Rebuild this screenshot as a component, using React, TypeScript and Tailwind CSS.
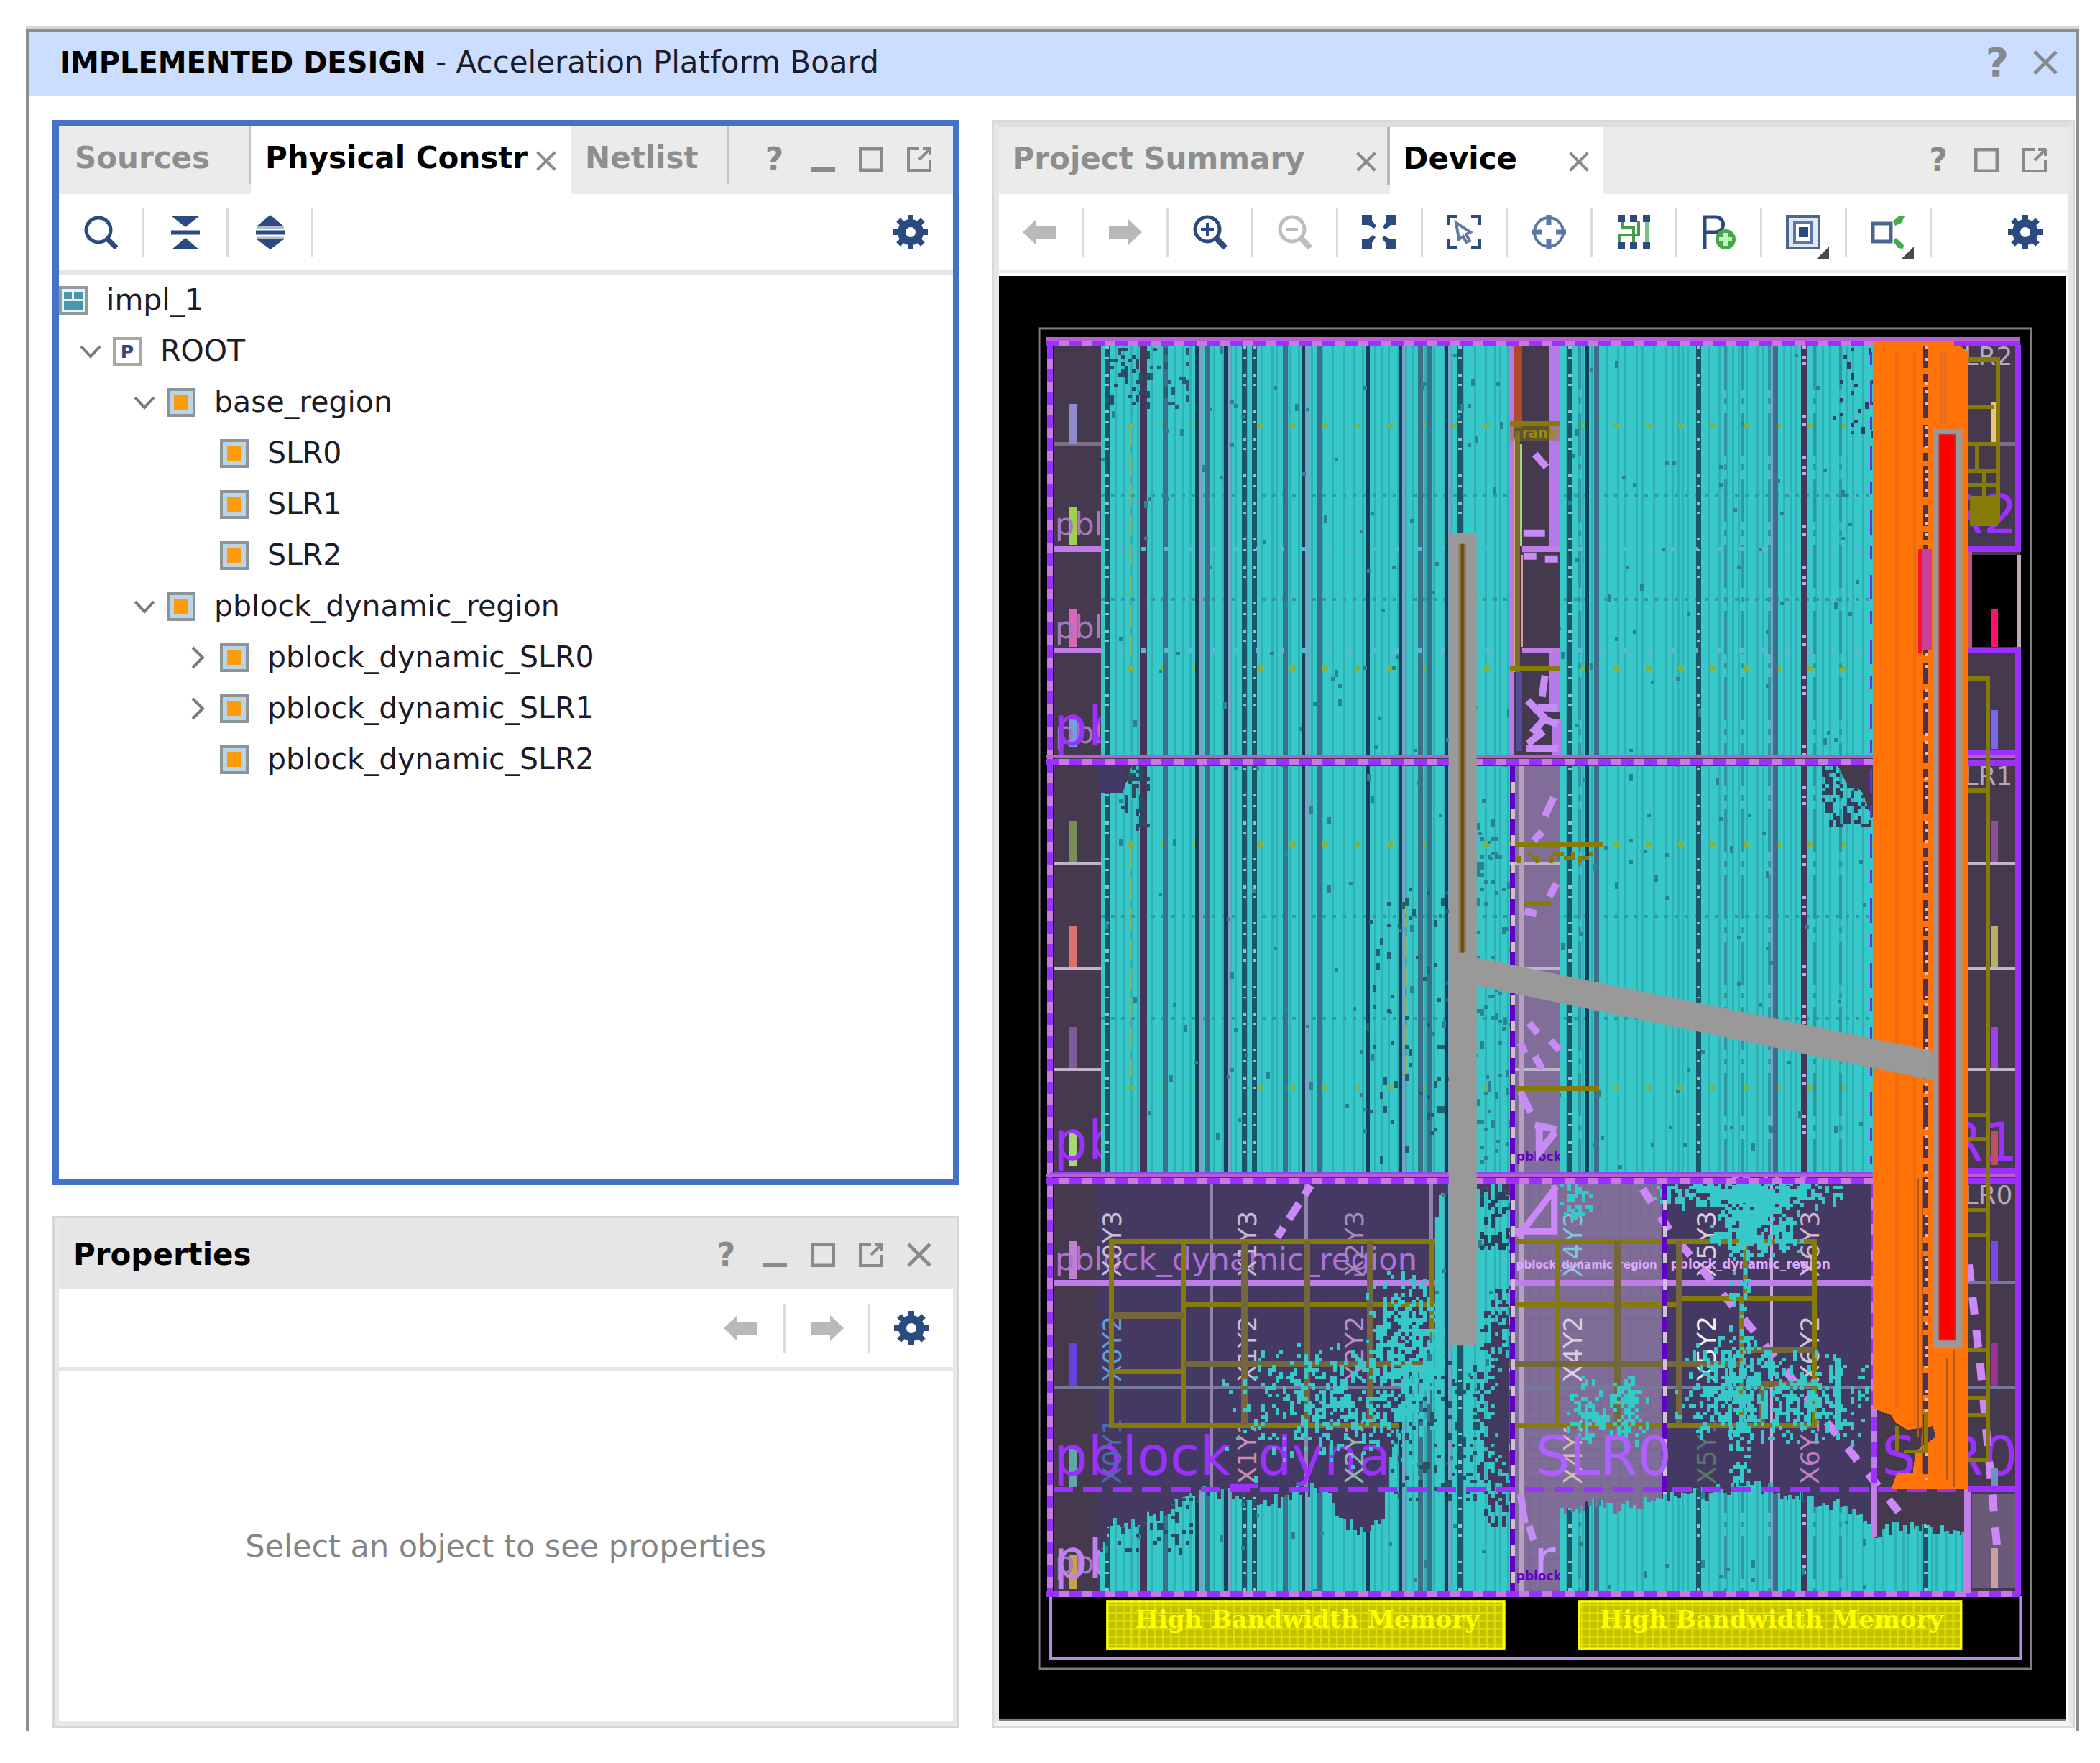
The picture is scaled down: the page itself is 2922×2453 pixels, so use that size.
import React from "react";

/* ---------- shared icons ---------- */

const NAVY = "#2b4a80";

function Svg({ children, size = 48, label }: { children: React.ReactNode; size?: number; label?: string }) {
  return (
    <svg width={size} height={size} viewBox="0 0 48 48" fill="none" className="shrink-0" aria-hidden={label ? undefined : true} aria-label={label}>
      {children}
    </svg>
  );
}

const SearchIcon = () => (
  <Svg>
    <circle cx="21" cy="21" r="17" stroke={NAVY} strokeWidth="5" />
    <path d="M33 33 46 46" stroke={NAVY} strokeWidth="7" />
  </Svg>
);
const CollapseIcon = () => (
  <Svg>
    <path d="M5 2H43L24 17Z M24 32 43 48H5Z" fill={NAVY} />
    <path d="M4 24.500H44" stroke={NAVY} strokeWidth="6" />
  </Svg>
);
const ExpandIcon = () => (
  <Svg>
    <path d="M24 0 43 16H5Z M5 34H43L24 48Z" fill={NAVY} />
    <path d="M4 24.500H44" stroke={NAVY} strokeWidth="6" />
    <path d="M5 17.500H43M5 32H43" stroke="#b3bccb" strokeWidth="3" />
  </Svg>
);
const GearIcon = () => (
  <Svg>
    <g fill={NAVY}>
      {[0, 45, 90, 135].map((a) => (
        <rect key={a} x="20" y="0" width="8" height="48" transform={`rotate(${a} 24 24)`} />
      ))}
      <circle cx="24" cy="24" r="18" />
    </g>
    <circle cx="24" cy="24" r="7" fill="#fff" />
  </Svg>
);
const ArrowIcon = ({ flip = false }: { flip?: boolean }) => (
  <Svg>
    <path d={flip ? "M48 24 29 6V15H2V33H29V42Z" : "M0 24 19 6V15H46V33H19V42Z"} fill="#b9b9b9" />
  </Svg>
);
const ZoomIcon = ({ minus = false }: { minus?: boolean }) => {
  const c = minus ? "#bdbdbd" : NAVY;
  return (
    <Svg>
      <circle cx="21" cy="20" r="17" stroke={c} strokeWidth="5" />
      <path d="M33 32 46 46" stroke={c} strokeWidth="8" />
      <path d={minus ? "M13 20H29" : "M12 20H30M21 11V29"} stroke={c} strokeWidth="4" />
    </Svg>
  );
};
const FitIcon = () => (
  <Svg>
    <g fill={NAVY}>
      {[0, 90, 180, 270].map((a) => (
        <path key={a} d="M0 0H14V8L20 15 17 19 9 14H0Z" transform={`rotate(${a} 24 24)`} />
      ))}
    </g>
  </Svg>
);
const SelectAreaIcon = () => (
  <Svg>
    <g fill={NAVY}>
      {[0, 90, 180, 270].map((a) => (
        <path key={a} d="M0 0H14V5H5V14H0Z" transform={`rotate(${a} 24 24)`} />
      ))}
    </g>
    <path d="M13 11 33 24 27 27 32 36 27 38 23 30 17 34Z" stroke="#6478a0" strokeWidth="4" />
  </Svg>
);
const TargetIcon = () => (
  <Svg>
    <circle cx="24" cy="24" r="20" stroke="#5d76a5" strokeWidth="4" />
    <path d="M24 0V14M24 34V48M0 24H14M34 24H48" stroke="#5d76a5" strokeWidth="7" />
  </Svg>
);
const RoutingIcon = () => (
  <Svg>
    <path d="M8 8V17H24V42M31 8V28H5V40" stroke="#4a9a4c" strokeWidth="4" />
    <path d="M43 8V40" stroke="#7cc08a" strokeWidth="6" />
    <g fill={NAVY}>
      {[2, 19, 37].map((x) => (
        <React.Fragment key={x}>
          <rect x={x} y="0" width="10" height="10" />
          <rect x={x} y="38" width="10" height="10" />
        </React.Fragment>
      ))}
    </g>
  </Svg>
);
const AddPblockIcon = () => (
  <Svg>
    <path d="M5 48V3H20C34 3 34 24 20 24H7" stroke={NAVY} strokeWidth="5" />
    <circle cx="34" cy="34" r="14" fill="#47a84a" />
    <path d="M34 25V43M25 34H43" stroke="#c5f5c5" strokeWidth="6" />
  </Svg>
);
const Corner = () => (
  <svg width="18" height="18" viewBox="0 0 16 16" className="absolute right-[22px] bottom-[-4px]" aria-hidden>
    <path d="M16 0V16H0Z" fill="#4a4a4a" />
  </svg>
);
const LayersIcon = () => (
  <Svg>
    <rect x="2" y="2" width="44" height="44" fill="#dfe9f2" stroke="#4d658f" strokeWidth="4" />
    <rect x="12" y="11" width="24" height="27" fill="#fff" stroke="#5d76a5" strokeWidth="4" />
    <rect x="18" y="17" width="13" height="14" fill={NAVY} />
  </Svg>
);
const DriverIcon = () => (
  <Svg>
    <rect x="3" y="12" width="25" height="25" stroke="#4d658f" strokeWidth="5" />
    <path d="M31 9 40 1 47 2 43 11 34 15ZM31 36 35 32 46 42 45 47 38 46Z" fill="#43ac48" />
  </Svg>
);

const MinimizeGlyph = () => <path d="M0 31H34" stroke="#8a8a8a" strokeWidth="6" />;
const MaximizeGlyph = () => <path d="M2 2H32V32H2Z" stroke="#8a8a8a" strokeWidth="5" />;
const FloatGlyph = () => <path d="M17 2H2V32H32V17M17 17 31 3M22 2H33M32 1V11" stroke="#8a8a8a" strokeWidth="4" />;
const CloseGlyph = () => <path d="M2 2 32 32M32 2 2 32" stroke="#8a8a8a" strokeWidth="5" />;

function WinButton({ label, children }: { label: string; children: React.ReactNode }) {
  return (
    <button type="button" aria-label={label} className="flex h-9 w-[34px] items-center justify-center">
      <svg width="34" height="34" viewBox="0 0 34 34" fill="none">
        {children}
      </svg>
    </button>
  );
}
function HelpButton({ big = false }: { big?: boolean }) {
  return (
    <button
      type="button"
      aria-label="Help"
      className={
        big
          ? "flex w-9 items-center justify-center text-[56px] leading-none font-bold text-[#85888f]"
          : "flex w-[34px] items-center justify-center text-[44px] leading-none font-bold text-[#8a8a8a]"
      }
    >
      ?
    </button>
  );
}

function ToolCell({ label, rule, children, corner }: { label: string; rule?: "left" | "right"; children: React.ReactNode; corner?: boolean }) {
  return (
    <div
      className={
        rule === "right"
          ? "w-[118px] border-r-[3px] border-[#dadada]"
          : rule === "left"
            ? "w-[118px] border-l-[3px] border-[#dadada]"
            : "w-[118px]"
      }
    >
      <button type="button" aria-label={label} className="relative flex h-[68px] w-full items-center justify-center">
        {children}
        {corner && <Corner />}
      </button>
    </div>
  );
}

function TabClose({ name }: { name: string }) {
  return (
    <button type="button" aria-label={`Close ${name}`} className="ml-auto flex h-11 w-7 items-end justify-center pb-1">
      <svg width="28" height="28" viewBox="0 0 34 34" fill="none">
        <CloseGlyph />
      </svg>
    </button>
  );
}

/* ---------- constraint tree ---------- */

type Node = { name: string; level: number; kind: "impl" | "root" | "block"; open?: boolean };

const nodes: Node[] = [
  { name: "impl_1", level: 0, kind: "impl" },
  { name: "ROOT", level: 1, kind: "root", open: true },
  { name: "base_region", level: 2, kind: "block", open: true },
  { name: "SLR0", level: 3, kind: "block" },
  { name: "SLR1", level: 3, kind: "block" },
  { name: "SLR2", level: 3, kind: "block" },
  { name: "pblock_dynamic_region", level: 2, kind: "block", open: true },
  { name: "pblock_dynamic_SLR0", level: 3, kind: "block", open: false },
  { name: "pblock_dynamic_SLR1", level: 3, kind: "block", open: false },
  { name: "pblock_dynamic_SLR2", level: 3, kind: "block" },
];

function NodeIcon({ kind }: { kind: Node["kind"] }) {
  return (
    <svg width="40" height="40" viewBox="0 0 40 40" fill="none" className="shrink-0" aria-hidden>
      {kind === "impl" && (
        <>
          <rect x="2" y="2" width="36" height="36" fill="#e8f5f7" stroke="#8f9c9e" strokeWidth="4" />
          <path d="M7 8H18V18H7ZM21 8H33V18H21ZM7 21H33V33H7Z" fill="#4c95ad" />
        </>
      )}
      {kind === "root" && (
        <>
          <rect x="2" y="2" width="36" height="36" fill="#fff" stroke="#a8a8a8" strokeWidth="4" />
          <text x="20" y="29" textAnchor="middle" fontSize="25" fontWeight="bold" fill={NAVY}>
            P
          </text>
        </>
      )}
      {kind === "block" && (
        <>
          <rect x="2" y="2" width="36" height="36" fill="#bcd5e4" stroke="#8a9499" strokeWidth="4" />
          <rect x="10" y="10" width="20" height="20" fill="#ff9a0a" />
        </>
      )}
    </svg>
  );
}

function TreeRow({ node }: { node: Node }) {
  return (
    <li className="flex h-[71px] items-center" role="treeitem" aria-level={node.level + 1}>
      {node.level > 1 && <span className={node.level === 2 ? "w-[75px]" : "w-[149px]"} />}
      {node.level > 0 && (
        <span className="flex w-[75px] pl-[28px]">
          {node.open !== undefined && (
            <button type="button" aria-label={`Toggle ${node.name}`} className="flex h-8 w-8 items-center justify-center">
              <svg width="32" height="32" viewBox="0 0 32 32" fill="none" stroke="#7a7a7a" strokeWidth="4">
                <path d={node.open ? "M3 9 16 23 29 9" : "M9 2 23 16 9 30"} />
              </svg>
            </button>
          )}
        </span>
      )}
      <NodeIcon kind={node.kind} />
      <span className="pl-[26px] text-[41px] leading-none text-[#1e1a26]">{node.name}</span>
    </li>
  );
}

/* ---------- device floorplan ---------- */

function random(seed: number) {
  let s = seed;
  return () => {
    s = (s + 0x6d2b79f5) | 0;
    let t = Math.imul(s ^ (s >>> 15), 1 | s);
    t = (t + Math.imul(t ^ (t >>> 7), 61 | t)) ^ t;
    return ((t ^ (t >>> 14)) >>> 0) / 4294967296;
  };
}

/** Path of small cells sprinkled over a box. */
function scatter(x0: number, y0: number, x1: number, y1: number, density: number, seed: number) {
  const r = random(seed);
  let d = "";
  for (let y = y0; y < y1; y += 5)
    for (let x = x0; x < x1; x += 5) if (r() < density) d += `M${x} ${y}h5v${r() < 0.3 ? 10 : 5}h-5z`;
  return d;
}

/** Like scatter, but densest at the middle of the box. */
function cloud(x0: number, y0: number, x1: number, y1: number, density: number, seed: number) {
  const r = random(seed);
  const cx = (x0 + x1) / 2;
  const cy = (y0 + y1) / 2;
  let d = "";
  for (let y = y0; y < y1; y += 5)
    for (let x = x0; x < x1; x += 5) {
      const q = Math.hypot((x - cx) / (x1 - cx), (y - cy) / (y1 - cy));
      if (r() < density * Math.max(0, 1.25 - q)) d += `M${x} ${y}h5v${r() < 0.4 ? 10 : 5}h-5z`;
    }
  return d;
}

/** Ragged skyline from a list of points down to a base line. */
function skyline(points: number[][], base: number, seed: number) {
  const r = random(seed);
  let d = `M${points[0][0]} ${base}`;
  for (let i = 0; i < points.length - 1; i++) {
    const [xa, ya] = points[i];
    const [xb, yb] = points[i + 1];
    if (xa === xb) {
      d += `V${yb}`;
      continue;
    }
    for (let x = xa; x < xb; x += 5) {
      const y = ya + ((yb - ya) * (x - xa)) / (xb - xa) + (r() - 0.4) * 20;
      d += `V${Math.round(y)}H${Math.min(x + 5, xb)}`;
    }
  }
  return d + `V${base}Z`;
}

const lowerLeft = [[1530, 2150], [1544, 2120], [1579, 2118], [1599, 2110], [1619, 2104], [1639, 2090], [1659, 2082], [1674, 2074], [1728, 2077], [1748, 2090], [1778, 2088], [1803, 2072], [1843, 2072], [1853, 2098], [1868, 2117], [1897, 2130], [1907, 2114], [1922, 2108], [1932, 2034], [1942, 1986], [1952, 1918], [1978, 1900], [1997, 1840], [1997, 1684], [2005, 1655], [2101, 1655]];
const lowerRight = [[2171, 2104], [2205, 2093], [2257, 2098], [2299, 2088], [2341, 2072], [2373, 2077], [2415, 2066], [2467, 2069], [2488, 2088], [2504, 2082], [2535, 2088], [2572, 2098], [2593, 2114], [2609, 2135], [2624, 2125], [2666, 2125], [2708, 2130], [2729, 2135], [2736, 2200]];

const cells =
  "M1532 480H2101V1052H1532ZM2171 480H2607V1052H2171Z" +
  "M1532 1104H1562L1575 1066H2101V1632H1532ZM2171 1066H2558L2570 1090 2590 1100 2607 1140V1632H2171Z" +
  skyline(lowerLeft, 2218, 5) +
  skyline(lowerRight, 2218, 8);

const darkLines = [1666, 1706, 1814, 1904, 1949, 2013, 2209];
const slateLines = [1622, 1681, 1789, 1837, 1977, 1990, 2222, 2471];
const paleLines = [1711, 1819, 1953, 1672, 2017, 2465];
const dottedLines = [1540, 1732, 1746, 2032, 2185, 2364, 2680];

function softLines() {
  const r = random(21);
  let d = "";
  for (let x = 1552; x < 2740; x += 6 + Math.floor(r() * 12)) d += `M${x} 482V2218`;
  return d;
}

const leftMarks: [number, number, string][] = [
  [562, 618, "#8c8cc8"], [706, 758, "#9ed050"], [847, 900, "#d868b8"], [995, 1040, "#70a0e0"],
  [1143, 1200, "#7a8f58"], [1288, 1345, "#e07070"], [1430, 1487, "#7d5a98"], [1577, 1624, "#a8d870"],
  [1728, 1780, "#c080d0"], [1870, 1930, "#6840e0"], [2012, 2070, "#60a8a8"], [2165, 2212, "#c8a050"],
];
const rightMarks: [number, number, string][] = [
  [560, 615, "#e8c878"], [847, 900, "#ff1070"], [988, 1042, "#7868f0"], [1143, 1200, "#8a5090"],
  [1288, 1345, "#b8b068"], [1430, 1487, "#a040e8"], [1575, 1622, "#c05060"], [1728, 1783, "#7848e8"],
  [1870, 1930, "#a03090"], [2043, 2068, "#7090c0"], [2155, 2210, "#c8a0a0"],
];

const tiles: [number, number, string, string][] = [
  [1560, 1778, "X0Y3", "#c8c0d0"], [1748, 1778, "X1Y3", "#c8b8d0"], [1897, 1778, "X2Y3", "#a888b8"],
  [2201, 1778, "X4Y3", "#7fc8d8"], [2387, 1778, "X5Y3", "#d8d0d8"], [2531, 1778, "X6Y3", "#d0b8c8"],
  [1560, 1924, "X0Y2", "#60a0d8"], [1748, 1924, "X1Y2", "#c8c0d0"], [1897, 1924, "X2Y2", "#b890c0"],
  [2201, 1924, "X4Y2", "#d8d0e0"], [2387, 1924, "X5Y2", "#f0f0f0"], [2531, 1924, "X6Y2", "#d0c8d8"],
  [1560, 2066, "X0Y1", "#5468b0"], [1748, 2066, "X1Y1", "#c890b0"], [1897, 2066, "X2Y1", "#90b8a8"],
  [2201, 2066, "X4Y1", "#d0c0b0"], [2387, 2066, "X5Y1", "#5a7868"], [2531, 2066, "X6Y1", "#c080c8"],
];

function Memory({ x, width }: { x: number; width: number }) {
  return (
    <g>
      <rect x={x} y="2227" width={width} height="70" fill="#c0c000" />
      <rect x={x} y="2227" width={width} height="70" fill="url(#mesh)" />
      <rect x={x + 2} y="2229" width={width - 4} height="66" fill="none" stroke="#ffff00" strokeWidth="3" />
      <text x={x + width / 2 + 2} y="2266" textAnchor="middle" fill="#ffff00" fontSize="34" fontWeight="bold" className="font-['DejaVu_Serif',serif]">
        High Bandwidth Memory
      </text>
    </g>
  );
}

function Floorplan() {
  return (
    <svg viewBox="1391 384 1484 2009" className="absolute inset-0 h-full w-full" role="img" aria-label="Device floorplan" fill="none">
      <defs>
        <pattern id="mesh" width="11" height="11" patternUnits="userSpaceOnUse">
          <path d="M0 0H11M0 0V11" stroke="#dede00" strokeWidth="5" />
        </pattern>
        <pattern id="fabric" width="14" height="14" patternUnits="userSpaceOnUse">
          <path d="M0 0H14M0 0V14" stroke="#3d3a78" strokeWidth="3" />
        </pattern>
        <clipPath id="placed">
          <path d={cells} />
        </clipPath>
      </defs>

      <rect x="1446" y="457" width="1381" height="1866" stroke="#7d7d7d" strokeWidth="3" />
      <path d="M1462 2222V2308H2812V2222" stroke="#b090d8" strokeWidth="4" />

      <g shapeRendering="crispEdges">
        {/* fabric */}
        <rect x="1466" y="480" width="1345" height="1740" fill="#45394d" />
        <rect x="1526" y="1648" width="1080" height="570" fill="#453960" />
        <rect x="1526" y="1648" width="1080" height="570" fill="url(#fabric)" opacity=".6" />
        <rect x="1526" y="1066" width="40" height="40" fill="#413a66" />
        <rect x="2108" y="1066" width="63" height="566" fill="#806e98" />
        <rect x="2108" y="1648" width="204" height="570" fill="#806e98" />
        <rect x="2108" y="1648" width="204" height="570" fill="url(#fabric)" opacity=".12" />
        <rect x="2745" y="2080" width="62" height="130" fill="#6a5a78" />
        <path d="M1466 618H2101M2120 618H2171M2740 618H2805" stroke="#7d6d8a" strokeWidth="6" />
        <path d="M1466 1202H2805M1466 1347H2805M1466 1489H2805" stroke="#c0b4c8" strokeWidth="4" />
        <path d="M2740 1786H2805M1466 1931H2805" stroke="#76789c" strokeWidth="4" />
        <path d="M1686 1648V2218M1818 1648V2218M1992 1648V2218" stroke="#9484a8" strokeWidth="5" />
        <path d="M2465 1648V2218" stroke="#c8a8d8" strokeWidth="4" />
        <path d="M2117 1066V1632M2117 1648V2218" stroke="#b8a0c0" strokeWidth="6" />
        <path d="M1466 764H2740M1466 905H2740M1466 1786H2607" stroke="#c07ce8" strokeWidth="8" />
        {leftMarks.map(([a, b, c]) => (
          <rect key={a} x="1488" y={a} width="11" height={b - a} fill={c} />
        ))}
      </g>

      {/* region names */}
      <g fontSize="43" fill="#a878c8">
        <text x="1468" y="744">pblock_dynamic_region</text>
        <text x="1468" y="888">pblock_dynamic_region</text>
        <text x="1468" y="1034">pblock_dynamic_region</text>
        <text x="1468" y="1768" fill="#b070dc">pblock_dynamic_region</text>
        <text x="1468" y="2190">pblock</text>
      </g>
      <g fontSize="75" fill="#9b30ff">
        <text x="1466" y="1036">pblock_dynamic</text>
        <text x="1466" y="1614">pblock_dynamic</text>
        <text x="1466" y="2053">pblock_dynamic</text>
        <text x="2808" y="2053" textAnchor="end">SLR0</text>
        <text x="2808" y="1616" textAnchor="end">SLR1</text>
        <text x="2808" y="742" textAnchor="end">SLR2</text>
        <text x="1466" y="2196" fill="#c080f0">pb</text>
        <text x="2134" y="2196" fill="#cc90ff">r</text>
      </g>
      <g fontSize="36" fill="#b8a8bc" textAnchor="end">
        <text x="2801" y="508">SLR2</text>
        <text x="2801" y="1092">SLR1</text>
        <text x="2801" y="1676">SLR0</text>
      </g>
      {tiles.map(([x, y, name, color]) => (
        <text key={`${x}-${y}`} transform={`translate(${x} ${y}) rotate(-90)`} fontSize="36" fill={color}>
          {name}
        </text>
      ))}
      <g fontSize="17" fontWeight="bold" fill="#e0a8ff">
        <text x="2110" y="1766" fontSize="15">pblock_dynamic_region</text>
        <text x="2325" y="1766">pblock_dynamic_region</text>
        <text x="2110" y="1616" fill="#6000c8">pblock</text>
        <text x="2110" y="2200" fill="#6000c8">pblock</text>
      </g>

      <g stroke="#cc88f8" strokeWidth="11">
        <path d="M1824 1650 1776 1724" strokeDasharray="16 14 26 14" />
        <path d="M2286 1655 2325 1715 2445 1858 2655 2120" strokeDasharray="22 24" />
        <path d="M2740 1760 2756 1900 2780 2160" strokeDasharray="24 22" />
        <path d="M2163 1650V1714H2108M2112 1722 2166 1652" strokeWidth="9" />
      </g>

      <g shapeRendering="crispEdges">
        {/* clock and memory outlines */}
        <g stroke="#867a08" strokeWidth="7">
          <path d="M1546 1728H2525V1984H1546ZM1647 1728V1984M1992 1728V1984M2167 1728V1984M1546 1909H1647M1647 1815H2337M2337 1807H2525M2429 1728V1807M2423 1807V1984M2079 1815V1984" />
          <path d="M1732 1728V1984M1819 1728V1984M1907 1728V1984M2251 1728V1984M2337 1728V1984M1546 1831H1647M1647 1898H2423M2423 1879H2525M2440 1926H2525M2452 1926V1984" stroke="#74673c" strokeWidth="9" />
        </g>

        {/* placed cells */}
        <path d={cells} fill="#37c8ca" />
        <g clipPath="url(#placed)">
          <path d={softLines()} stroke="#31b0b6" strokeWidth="3" />
          <path d="M1570 592H2607M1570 930H2607M1570 1175H2607M1570 1515H2607" stroke="#7fb440" strokeWidth="6" strokeDasharray="8 37" />
          <path d="M1573 590V930M1573 1180V1500M1957 1260V1500" stroke="#7db860" strokeWidth="4" strokeDasharray="30 12" />
          <path d="M1532 690H2607M1532 834H2607M1532 1275H2607M1532 1418H2607" stroke="#2e9aa2" strokeWidth="4" strokeDasharray="5 9" />
          <path d="M1591 482V2218" stroke="#453558" strokeWidth="10" />
          <path d="M2510 482V2218" stroke="#453558" strokeWidth="8" />
          <path d="M2510 482V2218" stroke="#c8a8d8" strokeWidth="6" strokeDasharray="4 9 4 5 4 70 4 7 4 42" />
          <path d={paleLines.map((x) => `M${x} 482V2218`).join("")} stroke="#76a4c4" strokeWidth="5" />
          <path d={slateLines.map((x) => `M${x} 482V2218`).join("")} stroke="#3a7088" strokeWidth="7" />
          <path d={darkLines.map((x) => `M${x} 482V2218`).join("")} stroke="#123f55" strokeWidth="5" />
          <path d={dottedLines.map((x) => `M${x} 482V2218`).join("")} stroke="#1c5468" strokeWidth="7" />
          <path d={dottedLines.map((x) => `M${x} 482V2218`).join("")} stroke="#86c4ce" strokeWidth="5" strokeDasharray="3 12 3 20 5 9 3 34" />
          <path d="M2198 482V2218M2401 482V2218M2424 482V2218M2462 482V2218M2525 482V2218M2561 482V2218" stroke="#3097a2" strokeWidth="4" strokeDasharray="60 12 8 12" />
          <path d="M1460 764H2607M1460 905H2607" stroke="#58b8d8" strokeWidth="6" strokeDasharray="6 26" />
          <path d={scatter(1532, 482, 2607, 2218, 0.005, 3)} fill="#2a8490" />
          <path d={scatter(1545, 484, 1600, 560, 0.3, 4)} fill="#2c4a60" />
          <path d={scatter(1600, 484, 1655, 575, 0.12, 6)} fill="#2c5a70" />
          <path d={scatter(1555, 1066, 1600, 1150, 0.3, 14)} fill="#2c4a60" />
          <path d={scatter(2535, 1066, 2607, 1150, 0.28, 15)} fill="#333e5c" />
          <path d={scatter(2550, 484, 2607, 600, 0.08, 16)} fill="#333e5c" />
          <path d={scatter(2055, 1130, 2101, 1620, 0.07, 17)} fill="#2a8490" />
          <path d={scatter(1900, 1200, 2016, 1620, 0.03, 18)} fill="#23606e" />
          <path d={scatter(1530, 2080, 1660, 2160, 0.16, 19)} fill="#2a4a60" />
          <path d={scatter(2060, 1650, 2101, 1745, 0.3, 22)} fill="#2a3f5c" />
          <path d={cloud(2055, 1790, 2125, 2130, 0.9, 23)} fill="#413a5e" />
          <path d={scatter(1935, 1880, 2060, 2090, 0.1, 24)} fill="#2a5064" />
        </g>
        <path d={cloud(1730, 1870, 1960, 2030, 0.42, 31)} fill="#37c8ca" />
        <path d={cloud(1900, 1770, 2010, 1990, 0.6, 32)} fill="#37c8ca" />
        <path d={cloud(2380, 1640, 2510, 1750, 0.85, 33)} fill="#37c8ca" />
        <path d={cloud(2300, 1636, 2570, 1680, 0.95, 41)} fill="#37c8ca" />
        <path d={cloud(2330, 1860, 2480, 2000, 0.5, 34)} fill="#37c8ca" />
        <path d={cloud(2430, 1880, 2600, 2010, 0.42, 35)} fill="#37c8ca" />
        <path d={cloud(2180, 1910, 2230, 2010, 0.5, 36)} fill="#37c8ca" />
        <path d={cloud(2230, 1910, 2292, 2010, 0.6, 37)} fill="#37c8ca" />
        <path d={scatter(2406, 1740, 2436, 2070, 0.26, 38)} fill="#37c8ca" />
        <path d={scatter(2171, 1648, 2215, 1690, 0.4, 39)} fill="#37c8ca" />
        <path d={scatter(1700, 1900, 2000, 2060, 0.02, 40)} fill="#37c8ca" />
        <path d="M2557 1890V1990" stroke="#37c8ca" strokeWidth="8" />

        {/* centre channel */}
        <rect x="2101" y="482" width="70" height="570" fill="#45394d" />
        <path d="M2104 482V1052" stroke="#b878e8" strokeWidth="7" />
        <path d="M2113 482V595" stroke="#b0482c" strokeWidth="11" />
        <path d="M2109 610V935" stroke="#d8b078" strokeWidth="3" />
        <path d="M2112 600V935" stroke="#80692e" strokeWidth="7" />
        <path d="M2117 618V760" stroke="#a0d878" strokeWidth="3" />
        <path d="M2118 772V900" stroke="#d8a080" strokeWidth="3" />
        <path d="M2114 935V1045" stroke="#544a98" strokeWidth="9" />
        <path d="M2163 482V760M2166 1000V1050M2163 905V990" stroke="#b878e8" strokeWidth="14" />
        <path d="M2118 764H2171M2118 905H2171" stroke="#c07ce8" strokeWidth="8" />
        <rect x="2101" y="588" width="70" height="26" fill="#867a08" opacity=".4" />
        <path d="M2101 590H2171M2101 930H2171M2101 1175H2230M2120 1258H2158M2101 1515H2225" stroke="#867a08" strokeWidth="7" />
        <path d={scatter(2101, 1186, 2225, 1196, 0.3, 52)} fill="#867a08" />
      </g>
      <g stroke="#c48cf4" strokeWidth="10">
        <path d="M2136 632 2152 650M2120 742H2150M2120 774H2138M2150 778H2168" />
        <path d="M2150 940 2146 970M2126 975 2150 1000 2132 1020M2140 985H2168M2146 1000 2168 1008M2126 1035 2148 1018M2124 1042H2168" />
        <path d="M2162 1110 2150 1136M2146 1158 2134 1170M2166 1230 2156 1248M2122 1268 2138 1272M2128 1424 2140 1438M2158 1448 2170 1462M2136 1470 2146 1488M2116 1452 2122 1466M2116 1520 2130 1548M2136 1566 2166 1572M2142 1566V1604L2164 1576" />
        <path d="M2116 2080 2122 2120M2128 2124 2134 2144" />
      </g>
      <text x="2118" y="609" fontSize="19" fontWeight="bold" fill="#9a8c08">
        rank
      </text>

      <g shapeRendering="crispEdges">
        {/* region borders */}
        <path d="M2105 1066V1632M2105 1648V2218M2317 1648V2080" stroke="#cfc0d8" strokeWidth="6" />
        <path d="M2105 1066V1632M2105 1648V2218M2317 1648V2080" stroke="#6000c8" strokeWidth="7" strokeDasharray="22 15" />
        <path d="M1456 477H2812M1456 1060H2740M1456 1644H2607M1461 471V2222M1456 2219H2812" stroke="#c878e8" strokeWidth="8" />
        <path d="M1456 477H2812M1456 1060H2740M1456 1644H2607M1461 482V2222M1456 2219H2812" stroke="#9b30ff" strokeWidth="8" strokeDasharray="17 15" />
        <path d="M1456 472H2812M1456 1053H2812M1456 1636H2812" stroke="#b860d0" strokeWidth="5" />
        <path d="M1461 1632H2740" stroke="#9048f8" strokeWidth="3" />
        <path d="M1466 2073H2740" stroke="#9b30ff" strokeWidth="7" strokeDasharray="27 14" />
        <path d="M2609 1648V2140" stroke="#c080e8" strokeWidth="8" />
        <path d="M2609 1648V2073" stroke="#9b30ff" strokeWidth="8" strokeDasharray="20 16" />
        <path d="M2604 490V1620" stroke="#6a30d0" strokeWidth="4" strokeDasharray="18 22 34 16" />
        <path d="M2738 2073V2218" stroke="#c080e8" strokeWidth="9" />

        {/* highlighted clock column */}
        <path d="M2607 475H2720L2740 490V2073H2632L2640 2050H2662L2666 2020 2680 2010 2694 2000 2690 1985 2655 1990 2640 1982 2632 1970 2607 1960Z" fill="#ff7308" />
        <path d="M2640 490V1960M2665 490V1985M2702 490V590M2708 490V590" stroke="#ea6c14" strokeWidth="4" />
        <path d="M2676 1640V2050M2670 1640V2000M2710 1890V2060M2720 1880V2070" stroke="#b05a20" strokeWidth="2" />
        <path d="M2680 482V2060" stroke="#4a3350" strokeWidth="6" strokeDasharray="30 8 12 6 44 10" />
        <path d="M2681 482V2060" stroke="#f0b8b8" strokeWidth="4" strokeDasharray="4 12 4 30 4 7" />
        <path d="M2682 764V905" stroke="#c84098" strokeWidth="14" />
        <path d="M2672 764V908" stroke="#ff1030" strokeWidth="5" />
        <path d="M2640 1985V2020M2680 1965V2020H2650" stroke="#867a08" strokeWidth="5" />

        {/* right edge */}
        <rect x="2744" y="772" width="68" height="128" fill="#000" />
        <path d="M2742 768V905" stroke="#c05080" strokeWidth="5" />
        <path d="M2740 764H2812M2740 905H2812M2809 480V768M2809 900V2220M2740 1047H2812M2740 1062H2812M2740 1630H2812M2740 1644H2812M2740 2073H2812" stroke="#9b30ff" strokeWidth="8" />
        <path d="M2720 478H2812" stroke="#9b30ff" strokeWidth="6" />
        <path d="M2810 772V900" stroke="#c0a8b8" strokeWidth="6" />
        {rightMarks.map(([a, b, c]) => (
          <rect key={a} x="2771" y={a} width="10" height={b - a} fill={c} />
        ))}
        <path d="M2740 500H2781V728M2740 566H2776M2740 618H2781M2752 618V655M2740 655H2781M2740 675H2781M2762 655V700" stroke="#867a08" strokeWidth="6" />
        <path d="M2742 690H2781V732H2742Z" fill="#867a08" />
        <path d="M2740 944H2767V2032H2740M2740 1100H2767M2740 1552H2767M2740 1586H2767M2740 1685H2767M2740 1719H2767M2740 1879H2767M2740 1946H2767M2740 1970H2767" stroke="#867a08" strokeWidth="6" />
      </g>
      <text x="2137" y="2053" fontSize="75" fill="#b060ff">
        SLR0
      </text>

      {/* selected path */}
      <path d="M2016 742H2055V1333L2691 1463V1504L2055 1372V1873H2016Z" fill="#999" />
      <path d="M2035 757V1326" stroke="#94763e" strokeWidth="10" />
      <path d="M2035 757V1326" stroke="#6a4c1a" strokeWidth="4" />
      <rect x="2691" y="597" width="40" height="1279" fill="#999" />
      <rect x="2699" y="605" width="22" height="1260" fill="#f00" stroke="#c03030" strokeWidth="2" />

      <Memory x={1539} width={556} />
      <Memory x={2196} width={535} />
    </svg>
  );
}

/* ---------- page ---------- */

export default function App() {
  return (
    <main className="h-screen bg-white pt-9 pr-[29px] pb-[45px] pl-9 font-['DejaVu_Sans',sans-serif]">
      <div className="flex h-full flex-col border-t-4 border-[#d6d6d6]">
        <div className="flex min-h-0 flex-1 flex-col border-x-4 border-t-4 border-[#8e8e8e]">
          <header className="flex h-[90px] shrink-0 items-center bg-[#ccdeff] pr-[26px] pb-1 pl-[43px]">
            <h1 className="text-[42px] leading-none whitespace-pre text-[#1b1b2b]">
              <strong className="text-[40px] text-black">IMPLEMENTED DESIGN</strong>
              {" - Acceleration Platform Board"}
            </h1>
            <div className="ml-auto flex items-center gap-8">
              <HelpButton big />
              <WinButton label="Close design">
                <CloseGlyph />
              </WinButton>
            </div>
          </header>

          <div className="grid min-h-0 flex-1 grid-cols-[1262fr_1508fr] gap-x-[45px] pt-[33px] pr-[2px] pb-1 pl-[33px]">
            <div className="grid min-h-0 grid-rows-[1482fr_712fr] gap-[43px]">
              {/* constraints */}
              <section className="flex min-h-0 flex-col border-[9px] border-[#4472c8]">
                <div className="flex h-[94px] shrink-0 items-stretch bg-[#ebebeb] text-[42px] leading-none font-bold text-[#8e8e8e]" role="tablist">
                  <div className="flex w-[267px] items-start">
                    <button type="button" role="tab" className="h-[80px] w-full border-r-[3px] border-[#c4c4c4] pt-2 pl-[22px] text-left font-bold">
                      Sources
                    </button>
                  </div>
                  <div className="flex w-[446px] items-start bg-white pt-[22px] pr-[21px] pl-[20px]">
                    <button type="button" role="tab" aria-selected="true" className="h-11 font-bold text-black">
                      Physical Constr
                    </button>
                    <TabClose name="Physical Constraints" />
                  </div>
                  <div className="flex w-[219px] items-start">
                    <button type="button" role="tab" className="h-[80px] w-full border-r-[3px] border-[#c4c4c4] pt-2 pl-[19px] text-left font-bold">
                      Netlist
                    </button>
                  </div>
                  <div className="ml-auto flex h-[92px] items-center gap-[33px] pr-[30px]">
                    <HelpButton />
                    <WinButton label="Minimize">
                      <MinimizeGlyph />
                    </WinButton>
                    <WinButton label="Maximize">
                      <MaximizeGlyph />
                    </WinButton>
                    <WinButton label="Float">
                      <FloatGlyph />
                    </WinButton>
                  </div>
                </div>
                <div className="flex h-[112px] shrink-0 items-center border-b-[6px] border-[#e6e6e6]" role="toolbar">
                  <ToolCell label="Search" rule="right">
                    <SearchIcon />
                  </ToolCell>
                  <ToolCell label="Collapse all" rule="right">
                    <CollapseIcon />
                  </ToolCell>
                  <ToolCell label="Expand all" rule="right">
                    <ExpandIcon />
                  </ToolCell>
                  <div className="ml-auto">
                    <ToolCell label="Settings">
                      <GearIcon />
                    </ToolCell>
                  </div>
                </div>
                <ul role="tree" className="min-h-0 flex-1 overflow-hidden">
                  {nodes.map((n) => (
                    <TreeRow key={n.name} node={n} />
                  ))}
                </ul>
              </section>

              {/* properties */}
              <section className="flex min-h-0 flex-col border-[3px] border-[#d6d6d6]">
                <div className="flex min-h-0 flex-1 flex-col border-x-[6px] border-b-[7px] border-[#e8e8e8]">
                  <div className="flex h-[98px] shrink-0 items-center bg-[#e6e6e6] pt-1 pr-[30px] pl-[20px]">
                    <h2 className="text-[42px] leading-none font-bold text-black">Properties</h2>
                    <div className="ml-auto flex items-center gap-[33px]">
                      <HelpButton />
                      <WinButton label="Minimize">
                        <MinimizeGlyph />
                      </WinButton>
                      <WinButton label="Maximize">
                        <MaximizeGlyph />
                      </WinButton>
                      <WinButton label="Float">
                        <FloatGlyph />
                      </WinButton>
                      <WinButton label="Close">
                        <CloseGlyph />
                      </WinButton>
                    </div>
                  </div>
                  <div className="flex h-[115px] shrink-0 items-center justify-end border-b-[6px] border-[#e6e6e6]" role="toolbar">
                    <ToolCell label="Back">
                      <ArrowIcon />
                    </ToolCell>
                    <ToolCell label="Forward" rule="left">
                      <ArrowIcon flip />
                    </ToolCell>
                    <ToolCell label="Settings" rule="left">
                      <GearIcon />
                    </ToolCell>
                  </div>
                  <p className="flex flex-1 items-center justify-center text-[43px] leading-none text-[#858585]">
                    Select an object to see properties
                  </p>
                </div>
              </section>
            </div>

            {/* device */}
            <section className="flex min-h-0 flex-col border-[3px] border-[#d9d9d9]">
              <div className="flex min-h-0 flex-1 flex-col border-x-[7px] border-t-[7px] border-b-[7px] border-x-[#e6e6e6] border-t-[#dedede] border-b-[#f4f4f4]">
                <div className="flex h-[93px] shrink-0 items-start bg-[#ebebeb] text-[42px] leading-none font-bold text-[#8e8e8e]" role="tablist">
                  <div className="flex h-[80px] w-[544px] items-start border-r-[4px] border-[#b8b8b8] pt-[22px] pr-[15px] pl-[19px]">
                    <button type="button" role="tab" className="h-11 font-bold">
                      Project Summary
                    </button>
                    <TabClose name="Project Summary" />
                  </div>
                  <div className="flex h-full w-[296px] items-start bg-white pt-[22px] pr-[19px] pl-[19px]">
                    <button type="button" role="tab" aria-selected="true" className="h-11 font-bold text-black">
                      Device
                    </button>
                    <TabClose name="Device" />
                  </div>
                  <div className="ml-auto flex h-[92px] items-center gap-[33px] pr-[29px]">
                    <HelpButton />
                    <WinButton label="Maximize">
                      <MaximizeGlyph />
                    </WinButton>
                    <WinButton label="Float">
                      <FloatGlyph />
                    </WinButton>
                  </div>
                </div>
                <div className="flex h-[110px] shrink-0 items-center border-b-[4px] border-[#ebebeb]" role="toolbar">
                  <ToolCell label="Back" rule="right">
                    <ArrowIcon />
                  </ToolCell>
                  <ToolCell label="Forward" rule="right">
                    <ArrowIcon flip />
                  </ToolCell>
                  <ToolCell label="Zoom in" rule="right">
                    <ZoomIcon />
                  </ToolCell>
                  <ToolCell label="Zoom out" rule="right">
                    <ZoomIcon minus />
                  </ToolCell>
                  <ToolCell label="Zoom to fit" rule="right">
                    <FitIcon />
                  </ToolCell>
                  <ToolCell label="Select area" rule="right">
                    <SelectAreaIcon />
                  </ToolCell>
                  <ToolCell label="Auto-fit selection" rule="right">
                    <TargetIcon />
                  </ToolCell>
                  <ToolCell label="Routing resources" rule="right">
                    <RoutingIcon />
                  </ToolCell>
                  <ToolCell label="Draw pblock" rule="right">
                    <AddPblockIcon />
                  </ToolCell>
                  <ToolCell label="Layers" rule="right" corner>
                    <LayersIcon />
                  </ToolCell>
                  <ToolCell label="Connectivity" rule="right" corner>
                    <DriverIcon />
                  </ToolCell>
                  <div className="ml-auto">
                    <ToolCell label="Settings">
                      <GearIcon />
                    </ToolCell>
                  </div>
                </div>
                <div className="mt-1 mr-[2px] min-h-0 flex-1 border-b-2 border-[#808080] bg-black">
                  <div className="relative h-full w-full">
                    <Floorplan />
                  </div>
                </div>
              </div>
            </section>
          </div>
        </div>
      </div>
    </main>
  );
}
